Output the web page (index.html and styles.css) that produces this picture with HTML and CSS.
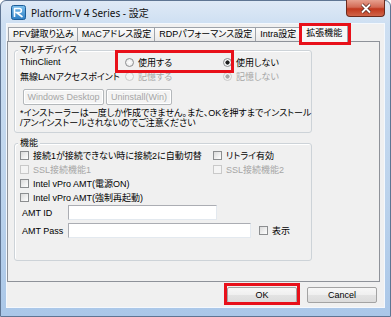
FILE: index.html
```html
<!DOCTYPE html>
<html lang="ja">
<head>
  <meta charset="UTF-8" />
  <title>Platform-V 4 Series - 設定</title>
  <link rel="stylesheet" href="styles.css">
</head>
<body>

  <div class="window">
    <!-- Barre de titre -->
    <div class="titlebar">
      <svg class="app-icon" width="15" height="15" viewBox="0 0 15 15">
        <defs>
          <linearGradient id="ig" x1="0" y1="0" x2="0" y2="1">
            <stop offset="0" stop-color="#7cc0ee"/>
            <stop offset="1" stop-color="#2f7fc4"/>
          </linearGradient>
        </defs>
        <rect x="0.5" y="0.5" width="14" height="14" rx="2" fill="url(#ig)" stroke="#1d5d98"/>
        <path d="M3 3.5 H8.5 C11 3.5 11 7.5 8.5 7.5 H5.5 L11.5 12" fill="none" stroke="#fff" stroke-width="1.6"/>
        <path d="M3.5 3.5 V12" fill="none" stroke="#fff" stroke-width="1.6"/>
      </svg>
      <span class="title">Platform-V 4 Series - 設定</span>
      <div class="close">
        <svg width="14" height="11" viewBox="0 0 14 11">
          <path d="M3 1.5 L11 9.5 M11 1.5 L3 9.5" stroke="#5a2a22" stroke-width="3.4"/>
          <path d="M3 1.5 L11 9.5 M11 1.5 L3 9.5" stroke="#fff" stroke-width="1.8"/>
        </svg>
      </div>
    </div>

    <div class="client">
      <!-- Onglets -->
      <div class="tabs">
        <span class="tab">PFV鍵取り込み</span>
        <span class="tab">MACアドレス設定</span>
        <span class="tab">RDPパフォーマンス設定</span>
        <span class="tab">Intra設定</span>
        <span class="tab active hl">拡張機能</span>
      </div>

      <div class="page">
        <!-- マルチデバイス -->
        <div class="group">
          <div class="legend">マルチデバイス</div>
          <div class="dev-grid">
            <span>ThinClient</span>
            <label class="radio hl"><i></i>使用する</label>
            <label class="radio on"><i></i>使用しない</label>
            <span>無線LANアクセスポイント</span>
            <label class="radio off"><i></i>記憶する</label>
            <label class="radio off on"><i></i>記憶しない</label>
          </div>
          <div class="win-btns">
            <button class="win-btn desk">Windows Desktop</button>
            <button class="win-btn uninst">Uninstall(Win)</button>
          </div>
          <p class="note">*インストーラーは一度しか作成できません。また、OKを押すまでインストール<br>/アンインストールされないのでご注意ください</p>
        </div>

        <!-- 機能 -->
        <div class="group func">
          <div class="legend">機能</div>
          <div class="func-grid">
            <label class="check"><i></i>接続1が接続できない時に接続2に自動切替</label>
            <label class="check"><i></i>リトライ有効</label>
            <label class="check off"><i></i>SSL接続機能1</label>
            <label class="check off"><i></i>SSL接続機能2</label>
            <label class="check"><i></i>Intel vPro AMT(電源ON)</label>
            <span></span>
            <label class="check"><i></i>Intel vPro AMT(強制再起動)</label>
            <span></span>
          </div>
          <div class="field">
            <span class="field-label">AMT ID</span>
            <span class="text-in id"></span>
          </div>
          <div class="field pass">
            <span class="field-label">AMT Pass</span>
            <span class="text-in pw"></span>
            <label class="check show"><i></i>表示</label>
          </div>
        </div>
      </div>

      <div class="footer">
        <button class="btn hl">OK</button>
        <button class="btn">Cancel</button>
      </div>
    </div>
  </div>

</body>
</html>
```

FILE: styles.css
```css
* {
  box-sizing: border-box;
}
body {
  margin: 0;
  background: #fff;
  font-family: "Liberation Sans", "Noto Sans CJK JP", sans-serif;
  font-size: 9px;
  font-feature-settings: "palt";
  color: #000;
}
.window {
  width: 391px;
  height: 317px;
  display: flex;
  flex-direction: column;
  padding: 0 6px 9px 6px;
  background: linear-gradient(to bottom, #dfe9f6 0, #cddff2 24px, #bcd3ec 60%, #aac7e8 100%);
  border: 1px solid #5f7593;
  border-radius: 6px 6px 0 0;
}
.titlebar {
  height: 23px;
  display: flex;
  align-items: center;
}
.app-icon {
  margin-left: 4px;
}
.title {
  margin-left: 5px;
  font-family: "Noto Sans", "Noto Sans CJK JP", sans-serif;
  font-size: 10px;
  color: #111;
}
.close {
  margin: -1px -1px 0 auto;
  align-self: flex-start;
  width: 39px;
  height: 17px;
  display: flex;
  align-items: center;
  justify-content: center;
  background: linear-gradient(to bottom, #e7a08f 0, #d36a55 45%, #c1381e 55%, #d0654a 100%);
  border: 1px solid #6b2a1d;
  border-top: none;
  border-radius: 0 0 4px 4px;
}
.client {
  flex: 1;
  display: flex;
  flex-direction: column;
  background: #f0f0f0;
  box-shadow: 0 0 0 1px #f4f8fd;
}
.tabs {
  height: 17px;
  display: flex;
  align-items: flex-end;
  padding-left: 1px;
}
.tab {
  height: 14px;
  padding: 0 3px 0 4px;
  line-height: 13px;
  white-space: nowrap;
  border: 1px solid #9ea3aa;
  border-bottom: none;
  margin-right: -1px;
  background: linear-gradient(to bottom, #fbfbfb, #e9e9e9);
}
.tab.active {
  position: relative;
  z-index: 1;
  height: 18px;
  margin: 0 0 -1px 2px;
  padding: 0 5px 0 4px;
  line-height: 16px;
  background: #f7f7f7;
}
.page {
  height: 241px;
  margin-right: 4px;
  padding: 1px 0 0 6px;
  border: 1px solid #8e9299;
  background: #f0f0f0;
}
.group {
  width: 298px;
  margin-top: 7px;
  padding: 0 0 4px 5px;
  border: 1px solid #cdd3d8;
  border-radius: 3px;
  box-shadow: inset 1px 1px #fff;
}
.group.func {
  margin-top: 10px;
  padding-bottom: 22px;
}
.legend {
  width: fit-content;
  margin: -7px 0 -1px -2px;
  padding: 0 2px;
  line-height: 12px;
  background: #f0f0f0;
}
.dev-grid {
  display: grid;
  grid-template-columns: 105px 98px auto;
  grid-auto-rows: 14px;
  align-items: center;
  white-space: nowrap;
}
.radio, .check {
  height: 14px;
  display: inline-flex;
  align-items: center;
  gap: 4px;
  white-space: nowrap;
}
.radio i {
  width: 9px;
  height: 9px;
  border-radius: 50%;
  border: 1px solid #8c8e90;
  background: radial-gradient(circle, #fff 0, #e4e4e4 100%);
}
.radio.on i {
  background: radial-gradient(circle, #1e1e1e 0, #1e1e1e 1.8px, #fff 2.4px, #e8e8e8 100%);
}
.off {
  color: #a6a6a6;
}
.radio.off i, .check.off i {
  border-color: #c9c9c9;
  background: #f4f4f4;
}
.radio.off.on i {
  background: radial-gradient(circle, #a8a8a8 0, #a8a8a8 1.8px, #f4f4f4 2.4px);
}
.win-btns {
  display: flex;
  gap: 2px;
  margin: 6px 0 0 3px;
}
.win-btn {
  height: 16px;
  padding: 0;
  font: inherit;
  color: #a6a6a6;
  border: 1px solid #b4b8bb;
  border-radius: 2px;
  background: #f4f4f4;
  box-shadow: inset 0 0 0 1px #fff;
}
.win-btn.desk {
  width: 81px;
}
.win-btn.uninst {
  width: 66px;
}
.note {
  margin: 3px 0 0;
  line-height: 10px;
  white-space: nowrap;
}
.func-grid {
  display: grid;
  grid-template-columns: 193px auto;
  grid-auto-rows: 14px;
  align-items: center;
}
.check i {
  width: 9px;
  height: 9px;
  border: 1px solid #8c8e90;
  background: linear-gradient(135deg, #dadada, #fff);
}
.field {
  display: flex;
  align-items: center;
  margin-top: 1px;
}
.field.pass {
  margin-top: 3px;
}
.field-label {
  width: 48px;
  padding-left: 2px;
}
.text-in {
  height: 15px;
  background: #fff;
  border: 1px solid;
  border-color: #abadb3 #e3e9ef #e3e9ef #abadb3;
}
.text-in.id {
  width: 149px;
}
.text-in.pw {
  width: 183px;
}
.check.show {
  margin-left: 8px;
}
.footer {
  height: 25px;
  display: flex;
  justify-content: flex-end;
  align-items: center;
  gap: 10px;
  padding: 0 7px 0 0;
}
.btn {
  width: 70px;
  height: 16px;
  padding: 0;
  font: inherit;
  color: #000;
  border: 1px solid #a3a3a3;
  border-radius: 2px;
  background: linear-gradient(to bottom, #f7f7f7 0, #efefef 50%, #e3e3e3 51%, #dcdcdc 100%);
}

/* Cadres rouges d'annotation */
.hl {
  position: relative;
}
.hl::after {
  content: "";
  position: absolute;
  border: 3px solid #e8101a;
}
.tab.hl::after {
  left: -3px;
  right: -4px;
  top: -2px;
  bottom: -3px;
}
.radio.hl::after {
  left: -10px;
  right: -11px;
  top: -5px;
  bottom: -4px;
}
.btn.hl::after {
  left: -4px;
  right: -4px;
  top: -5px;
  bottom: -3px;
}
```
